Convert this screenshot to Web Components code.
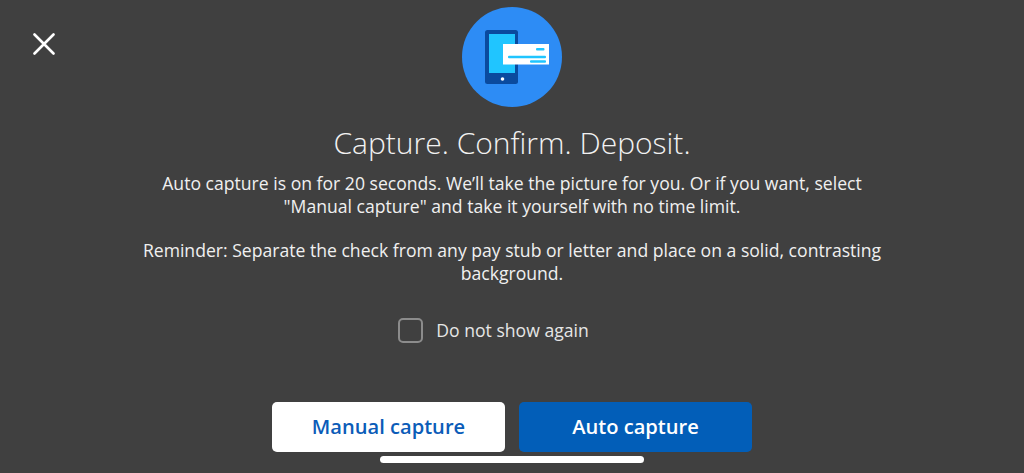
<!DOCTYPE html>
<html lang="en">
<head>
<meta charset="utf-8">
<title>Capture. Confirm. Deposit.</title>
<style>
  html, body { margin: 0; padding: 0; height: 100%; background: #404040; overflow: hidden; }
</style>
</head>
<body>
<capture-tips>
  <check-icon slot="icon"></check-icon>
  <span slot="title">Capture. Confirm. Deposit.</span>
  <p>Auto capture is on for 20 seconds. We’ll take the picture for you. Or if you want, select<br>"Manual capture" and take it yourself with no time limit.</p>
  <p>Reminder: Separate the check from any pay stub or letter and place on a solid, contrasting<br>background.</p>
  <tips-checkbox slot="option">Do not show again</tips-checkbox>
  <tips-button slot="actions">Manual capture</tips-button>
  <tips-button slot="actions" primary>Auto capture</tips-button>
</capture-tips>
<script>
class CheckIcon extends HTMLElement {
  constructor() {
    super();
    this.attachShadow({ mode: "open" }).innerHTML = `
      <style>
        :host { display: block; width: 100px; height: 100px; }
        svg { display: block; }
      </style>
      <svg width="100" height="100" viewBox="0 0 100 100">
        <circle cx="50" cy="50" r="50" fill="#2d8cf5"/>
        <rect x="23" y="23" width="33" height="54" rx="2.5" fill="#0a4a9e"/>
        <rect x="27" y="27" width="26" height="39" fill="#20c5ff"/>
        <circle cx="40.5" cy="72" r="1.8" fill="#fff"/>
        <rect x="41" y="37" width="46" height="20.5" fill="#fff"/>
        <rect x="74" y="41" width="8.5" height="2.5" rx="1" fill="#20c5ff"/>
        <rect x="46" y="48.8" width="38" height="2.5" rx="1" fill="#20c5ff"/>
        <rect x="68" y="53.3" width="16" height="2.5" rx="1" fill="#20c5ff"/>
      </svg>`;
  }
}

class TipsCheckbox extends HTMLElement {
  constructor() {
    super();
    this.attachShadow({ mode: "open" }).innerHTML = `
      <style>
        :host { display: inline-flex; align-items: center; gap: 13px; font-size: 17.6px; line-height: 25px; color: #e6e6e6; }
        .box { width: 21px; height: 21px; border: 2px solid #8c8c8c; border-radius: 5px; }
      </style>
      <span class="box"></span><slot></slot>`;
  }
}

class TipsButton extends HTMLElement {
  constructor() {
    super();
    this.attachShadow({ mode: "open" }).innerHTML = `
      <style>
        :host {
          display: flex; align-items: center; justify-content: center;
          box-sizing: border-box; width: 233px; height: 50px; padding-bottom: 2px; border-radius: 5px;
          background: #fff; color: #0b5cb8;
          font-size: 20.1px; font-weight: 600;
        }
        :host([primary]) { background: #025eb8; color: #fff; }
      </style>
      <slot></slot>`;
  }
}

class CaptureTips extends HTMLElement {
  constructor() {
    super();
    this.attachShadow({ mode: "open" }).innerHTML = `
      <style>
        :host {
          display: flex; flex-direction: column; align-items: center;
          position: relative; box-sizing: border-box; height: 473px; padding-top: 7px;
          font-family: "Open Sans", sans-serif; color: #f0f0f0; text-align: center;
        }
        .close { position: absolute; left: 33px; top: 33px; display: block; }
        h1 { margin: 16px 0 0; font-size: 30px; line-height: 40px; font-weight: 300; color: #f2f2f2; }
        .body { margin-top: 9px; font-size: 17.6px; line-height: 23px; }
        ::slotted(p) { margin: 0 0 21px; }
        .option { margin: 12px 37px 0 0; display: flex; }
        .actions { margin-top: 59px; display: flex; gap: 14px; }
        .home { position: absolute; left: 380px; top: 456px; width: 264px; height: 7px; border-radius: 4px; background: #fff; }
      </style>
      <svg class="close" width="22" height="22" viewBox="0 0 22 22">
        <path d="M1.5 1.5 L20.5 20.5 M20.5 1.5 L1.5 20.5" stroke="#fff" stroke-width="2.6" stroke-linecap="round"/>
      </svg>
      <slot name="icon"></slot>
      <h1><slot name="title"></slot></h1>
      <div class="body"><slot></slot></div>
      <div class="option"><slot name="option"></slot></div>
      <div class="actions"><slot name="actions"></slot></div>
      <div class="home"></div>`;
  }
}

customElements.define("check-icon", CheckIcon);
customElements.define("tips-checkbox", TipsCheckbox);
customElements.define("tips-button", TipsButton);
customElements.define("capture-tips", CaptureTips);
</script>
</body>
</html>
